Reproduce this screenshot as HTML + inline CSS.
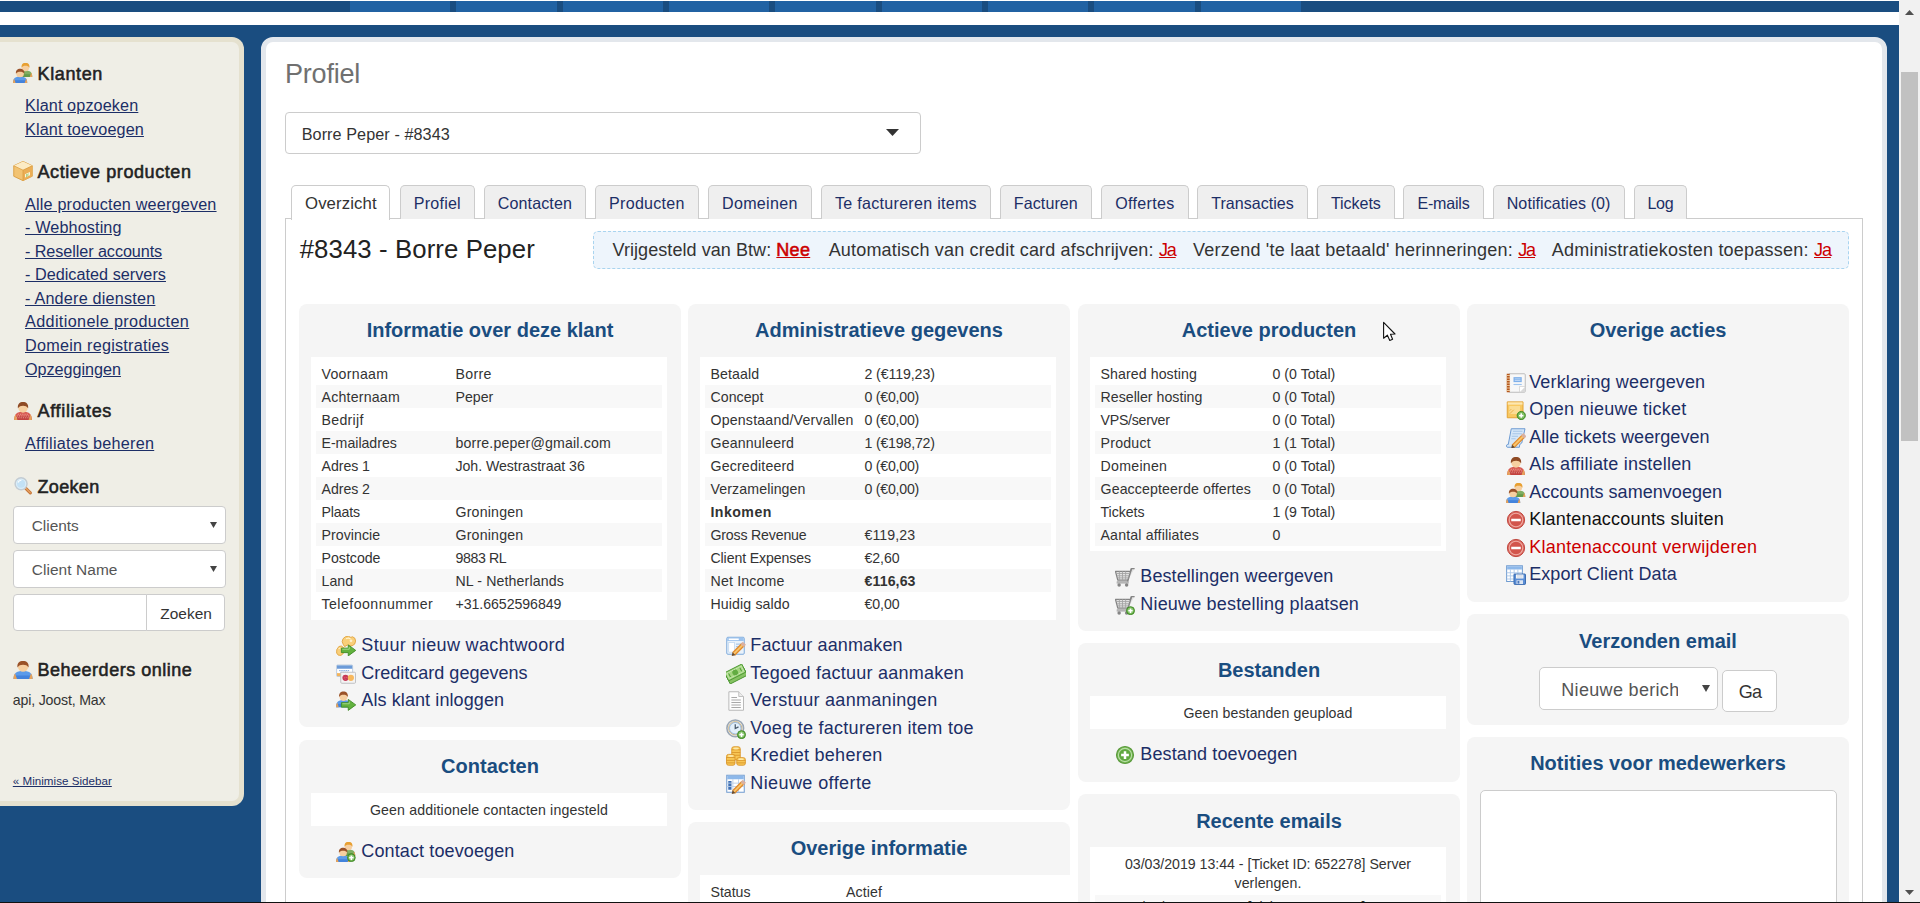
<!DOCTYPE html>
<html lang="nl"><head><meta charset="utf-8"><title>Profiel</title>
<style>
*{box-sizing:border-box;margin:0;padding:0}
html,body{width:1920px;height:903px;overflow:hidden}
body{background:#1a4d80;font-family:"Liberation Sans", sans-serif;color:#333;position:relative;-webkit-font-smoothing:antialiased}
a{color:inherit;text-decoration:none}
ul{list-style:none}
h1,h2,h3{font-weight:400;font-size:inherit}
.abs{position:absolute}
.bl{position:absolute;display:flex;align-items:baseline;white-space:nowrap;line-height:1}
.bl::before{content:"";display:block;width:0;height:30px;flex:none}
.bl.c{justify-content:center}
.t{white-space:pre}
.ic{display:block;flex:none}
#nav{position:absolute;left:0;top:0;width:1899px;height:12px;background:#1a4d80;border-top:1px solid #fff}
#nav li{position:absolute;top:0;height:11px;background:#2162a3}
#topbar{position:absolute;left:0;top:12px;width:1899px;height:13px;background:#fff}
#sidebar{position:absolute;left:0;top:37px;width:244px;height:769px;background:#efeee6;border:5px solid #e5e1cf;border-left:0;border-radius:0 12px 12px 0}
#content{position:absolute;left:261px;top:37px;width:1626px;height:900px;background:#fff;border:5px solid #e3e7ec;border-radius:12px}
.sel{position:absolute;background:#fff;border:1px solid #ccc;border-radius:4px}
.tabs li{position:absolute;top:185px;height:34px;background:#efefef;border:1px solid #ccc;border-bottom:0;border-radius:5px 5px 0 0}
.tabs li.on{background:#fff;height:35px}
#tabbox{position:absolute;left:285px;top:218px;width:1578px;height:800px;border:1px solid #ccc}
#infobox{position:absolute;left:593px;top:231px;width:1256px;height:38px;background:#eef5fc;border:1px dashed #a9d4ef;border-radius:5px}
.box{position:absolute;width:382px;background:#f5f5f5;border-radius:8px}
.title{font-family:"Liberation Sans",sans-serif;font-weight:700;font-size:20px;color:#1a4d80;letter-spacing:0}
.stats{position:absolute;left:12px;width:356px;background:#fff;padding:5px}
.r{display:flex;align-items:baseline;height:23px;white-space:nowrap;line-height:1;position:relative}
.r::before{content:"";display:block;width:0;height:17px;flex:none}
.r:nth-child(even){background:#f8f8f8}
.r .l{flex:none;padding-left:5.500px;display:block}
.r .v{flex:none;display:block}
.r.c{justify-content:center}
.lk{position:absolute;display:flex;align-items:baseline;white-space:nowrap;line-height:1;color:#1c2e66}
.lk::before{content:"";display:block;width:0;height:30px;flex:none}
#sb{position:absolute;left:1899px;top:0;width:21px;height:903px;background:#f1f1f1}
#sb i{position:absolute;left:2px;width:17px;background:#c1c1c1;top:72px;height:369px}
#bottomline{position:absolute;left:0;top:902px;width:1920px;height:1px;background:#111}
</style></head>
<body>
<ul id="nav">
<li style="left:350.0px;width:100.300px"></li>
<li style="left:456.3px;width:100.300px"></li>
<li style="left:562.7px;width:100.300px"></li>
<li style="left:669.0px;width:100.300px"></li>
<li style="left:775.3px;width:100.300px"></li>
<li style="left:881.6px;width:100.300px"></li>
<li style="left:988.0px;width:100.300px"></li>
<li style="left:1094.3px;width:100.300px"></li>
<li style="left:1200.6px;width:100.300px"></li>
</ul>
<div id="topbar"></div>
<div id="sidebar"></div>
<div class="abs" style="left:13px;top:62.5px"><svg class="ic" width="20" height="20" viewBox="0 0 16 16"><g transform="translate(4.6 -0.2) scale(0.9 0.95)"><path d="M0 12C0 8.300 1.600 6.600 6 6.600S12 8.300 12 12Z" fill="#7fae62"/><path d="M.2 12C.2 11 .5 10.300 1 9.600L11 9.600C11.500 10.300 11.800 11 11.800 12Z" fill="#4f8a34" opacity=".55"/><path d="M0 12C0 10.500.3 9.300 1 8.400L2.200 12ZM12 12C12 10.500 11.700 9.300 11 8.400L9.800 12Z" fill="#e6a25a"/><circle cx="6" cy="4" r="3.200" fill="#f6cfa0"/><path d="M2.500 4.300C2.100 1.300 3.800 0 6 0S9.900 1.300 9.500 4.300C8.700 2.900 7.600 2.500 6 2.500S3.300 2.900 2.500 4.300Z" fill="#e8a032"/></g><g transform="translate(0 4.5) scale(0.95 0.96)"><path d="M0 12C0 8.300 1.600 6.600 6 6.600S12 8.300 12 12Z" fill="#5b9bea"/><path d="M.2 12C.2 11 .5 10.300 1 9.600L11 9.600C11.500 10.300 11.800 11 11.800 12Z" fill="#2f6fd0" opacity=".55"/><path d="M0 12C0 10.500.3 9.300 1 8.400L2.200 12ZM12 12C12 10.500 11.700 9.300 11 8.400L9.800 12Z" fill="#e6a25a"/><circle cx="6" cy="4" r="3.200" fill="#f6cfa0"/><path d="M2.500 4.300C2.100 1.300 3.800 0 6 0S9.900 1.300 9.500 4.300C8.700 2.900 7.600 2.500 6 2.500S3.300 2.900 2.500 4.300Z" fill="#9a5228"/></g></svg></div>
<h3 class="bl" style="left:37.5px;top:50px;"><span class="t" id="t1" style="font-size:18.03px;-webkit-text-stroke:.55px currentColor;color:#222;letter-spacing:0.618px;">Klanten</span></h3>
<div class="bl" style="left:25px;top:81.3px;"><a><span class="t" id="t2" style="font-size:16.22px;color:#1c2e66;text-decoration:underline;letter-spacing:0.115px;">Klant opzoeken</span></a></div>
<div class="bl" style="left:25px;top:104.80000000000001px;"><a><span class="t" id="t3" style="font-size:16.22px;color:#1c2e66;text-decoration:underline;letter-spacing:0.12px;">Klant toevoegen</span></a></div>
<div class="abs" style="left:13px;top:160.5px"><svg class="ic" width="20" height="20" viewBox="0 0 16 16"><path d="M8 .3l7.400 3.500v8.400l-7.400 3.500-7.400-3.500v-8.400z" fill="#f2c372" stroke="#d99b3e" stroke-width=".7" stroke-linejoin="round"/><path d="M8 .3l7.400 3.500-7.400 3.500-7.400-3.500z" fill="#fcebc4"/><path d="M8 7.300v8.400l7.400-3.500v-8.400z" fill="#ebae56"/><path d="M8 7.300v8.400M.6 3.800l7.400 3.500 7.400-3.500" fill="none" stroke="#d99b3e" stroke-width=".6"/><path d="M9.600 10.600l4-1.900v2.600l-4 1.900z" fill="#fdf6dc"/><path d="M10.400 11.300l2.400-1.200M10.400 12.300l2.400-1.200" stroke="#62b23e" stroke-width=".7" stroke-dasharray=".8 .5"/></svg></div>
<h3 class="bl" style="left:37.5px;top:148px;"><span class="t" id="t4" style="font-size:18.03px;-webkit-text-stroke:.55px currentColor;color:#222;letter-spacing:0.58px;">Actieve producten</span></h3>
<div class="bl" style="left:25px;top:179.7px;"><a><span class="t" id="t5" style="font-size:16.22px;color:#1c2e66;text-decoration:underline;letter-spacing:0.174px;">Alle producten weergeven</span></a></div>
<div class="bl" style="left:25px;top:203.2px;"><a><span class="t" id="t6" style="font-size:16.22px;color:#1c2e66;text-decoration:underline;letter-spacing:0.121px;">- Webhosting</span></a></div>
<div class="bl" style="left:25px;top:226.8px;"><a><span class="t" id="t7" style="font-size:16.22px;color:#1c2e66;text-decoration:underline;letter-spacing:-0.081px;">- Reseller accounts</span></a></div>
<div class="bl" style="left:25px;top:250.39999999999998px;"><a><span class="t" id="t8" style="font-size:16.22px;color:#1c2e66;text-decoration:underline;letter-spacing:0.025px;">- Dedicated servers</span></a></div>
<div class="bl" style="left:25px;top:273.9px;"><a><span class="t" id="t9" style="font-size:16.22px;color:#1c2e66;text-decoration:underline;letter-spacing:0.198px;">- Andere diensten</span></a></div>
<div class="bl" style="left:25px;top:297.4px;"><a><span class="t" id="t10" style="font-size:16.22px;color:#1c2e66;text-decoration:underline;letter-spacing:0.355px;">Additionele producten</span></a></div>
<div class="bl" style="left:25px;top:321.0px;"><a><span class="t" id="t11" style="font-size:16.22px;color:#1c2e66;text-decoration:underline;letter-spacing:0.239px;">Domein registraties</span></a></div>
<div class="bl" style="left:25px;top:344.5px;"><a><span class="t" id="t12" style="font-size:16.22px;color:#1c2e66;text-decoration:underline;letter-spacing:-0.044px;">Opzeggingen</span></a></div>
<div class="abs" style="left:13px;top:399.8px"><svg class="ic" width="20" height="20" viewBox="0 0 16 16"><g transform="translate(1 1.5) scale(1.17 1.2)"><path d="M0 12C0 8.300 1.600 6.600 6 6.600S12 8.300 12 12Z" fill="#d85a52"/><path d="M.2 12C.2 11 .5 10.300 1 9.600L11 9.600C11.500 10.300 11.800 11 11.800 12Z" fill="#b03030" opacity=".55"/><path d="M0 12C0 10.500.3 9.300 1 8.400L2.200 12ZM12 12C12 10.500 11.700 9.300 11 8.400L9.800 12Z" fill="#e6a25a"/><circle cx="6" cy="4" r="3.200" fill="#f6cfa0"/><path d="M2.500 4.300C2.100 1.300 3.800 0 6 0S9.900 1.300 9.500 4.300C8.700 2.900 7.600 2.500 6 2.500S3.300 2.900 2.500 4.300Z" fill="#8e4a24"/></g><path d="M3 12.800h10M2.500 14.200h11M3.800 11.400h8.400" stroke="#f4b8b0" stroke-width=".55" stroke-dasharray=".9 .9"/></svg></div>
<h3 class="bl" style="left:37.5px;top:387.3px;"><span class="t" id="t13" style="font-size:18.03px;-webkit-text-stroke:.55px currentColor;color:#222;letter-spacing:0.678px;">Affiliates</span></h3>
<div class="bl" style="left:25px;top:419.2px;"><a><span class="t" id="t14" style="font-size:16.22px;color:#1c2e66;text-decoration:underline;letter-spacing:0.239px;">Affiliates beheren</span></a></div>
<div class="abs" style="left:13px;top:475.0px"><svg class="ic" width="20" height="20" viewBox="0 0 16 16"><g transform="translate(.8 1.300) scale(.9)"><path d="M9.800 9.800l4.700 4.700" stroke="#c8783a" stroke-width="2.800" stroke-linecap="round"/><path d="M10.400 10.200l4 4" stroke="#eaa86a" stroke-width=".9" stroke-linecap="round"/><circle cx="6.300" cy="6.300" r="5.300" fill="#d9edf9" stroke="#c3ccd3" stroke-width="1.300"/><circle cx="6.300" cy="6.300" r="3.600" fill="#c3e1f5"/><path d="M3.600 5.200a3 3 0 0 1 3-2" stroke="#fff" stroke-width="1" fill="none"/></g></svg></div>
<h3 class="bl" style="left:37.5px;top:462.5px;"><span class="t" id="t15" style="font-size:18.03px;-webkit-text-stroke:.55px currentColor;color:#222;letter-spacing:0.328px;">Zoeken</span></h3>
<div class="sel" style="left:13px;top:506px;width:213px;height:37.500px"><svg class="abs" width="7" height="6" viewBox="0 0 7 6" style="left:196px;top:15px"><path d="M0 0h7l-3.500 6z" fill="#444"/></svg></div>
<div class="bl" style="left:31.7px;top:501.20000000000005px;"><span class="t" id="t16" style="font-size:15.45px;color:#555;letter-spacing:-0.007px;">Clients</span></div>
<div class="sel" style="left:13px;top:550px;width:213px;height:37.500px"><svg class="abs" width="7" height="6" viewBox="0 0 7 6" style="left:196px;top:15px"><path d="M0 0h7l-3.500 6z" fill="#444"/></svg></div>
<div class="bl" style="left:31.7px;top:545.3px;"><span class="t" id="t17" style="font-size:15.45px;color:#555;letter-spacing:0.081px;">Client Name</span></div>
<div class="sel" style="left:13px;top:594px;width:134px;height:36.500px;border-radius:4px 0 0 4px"></div>
<div class="sel" style="left:146px;top:594px;width:79px;height:36.500px;border-radius:0 4px 4px 0"></div>
<div class="bl" style="left:160.3px;top:588.5px;"><span class="t" id="t18" style="font-size:15.45px;color:#333;letter-spacing:0.008px;">Zoeken</span></div>
<div class="abs" style="left:13px;top:658.5px"><svg class="ic" width="20" height="20" viewBox="0 0 16 16"><g transform="translate(0.4 1.6) scale(1.27 1.2)"><path d="M0 12C0 8.300 1.600 6.600 6 6.600S12 8.300 12 12Z" fill="#5b9bea"/><path d="M.2 12C.2 11 .5 10.300 1 9.600L11 9.600C11.500 10.300 11.800 11 11.800 12Z" fill="#2f6fd0" opacity=".55"/><path d="M0 12C0 10.500.3 9.300 1 8.400L2.200 12ZM12 12C12 10.500 11.700 9.300 11 8.400L9.800 12Z" fill="#e6a25a"/><circle cx="6" cy="4" r="3.200" fill="#f6cfa0"/><path d="M2.500 4.300C2.100 1.300 3.800 0 6 0S9.900 1.300 9.500 4.300C8.700 2.900 7.600 2.500 6 2.500S3.300 2.900 2.500 4.300Z" fill="#9a5228"/></g></svg></div>
<h3 class="bl" style="left:37.5px;top:646px;"><span class="t" id="t19" style="font-size:18.03px;-webkit-text-stroke:.55px currentColor;color:#222;letter-spacing:0.505px;">Beheerders online</span></h3>
<div class="bl" style="left:12.8px;top:675.3px;"><span class="t" id="t20" style="font-size:14.16px;color:#333;letter-spacing:-0.168px;">api, Joost, Max</span></div>
<div class="bl" style="left:12.8px;top:755px;"><a><span class="t" id="t21" style="font-size:11.59px;color:#1c2e66;text-decoration:underline;letter-spacing:0.03px;">« Minimise Sidebar</span></a></div>
<div id="content"></div>
<h1 class="bl" style="left:285px;top:53px;"><span class="t" id="t22" style="font-size:27.04px;color:#707070;letter-spacing:-0.212px;">Profiel</span></h1>
<div class="sel" style="left:285px;top:112px;width:636px;height:42px"><svg class="abs" width="13" height="7" viewBox="0 0 13 7" style="left:600px;top:16px"><path d="M0 0h13l-6.500 7z" fill="#333"/></svg></div>
<div class="bl" style="left:301.7px;top:110px;"><span class="t" id="t23" style="font-size:16.22px;color:#333;letter-spacing:0.07px;">Borre Peper - #8343</span></div>
<div id="tabbox"></div>
<ul class="tabs">
<li class="on" style="left:291.3px;width:99.2px"></li>
<li class="" style="left:400.0px;width:74.7px"></li>
<li class="" style="left:484.0px;width:101.8px"></li>
<li class="" style="left:595.0px;width:103.8px"></li>
<li class="" style="left:708.0px;width:103.7px"></li>
<li class="" style="left:821.2px;width:169.6px"></li>
<li class="" style="left:1000.0px;width:91.7px"></li>
<li class="" style="left:1101.2px;width:87.6px"></li>
<li class="" style="left:1197.2px;width:110.6px"></li>
<li class="" style="left:1317.0px;width:77.7px"></li>
<li class="" style="left:1403.3px;width:80.4px"></li>
<li class="" style="left:1492.5px;width:132.2px"></li>
<li class="" style="left:1634.2px;width:52.5px"></li>
</ul>
<div class="bl c" style="left:291.3px;width:99.2px;top:179px;"><a><span class="t" id="t24" style="font-size:16.74px;color:#333;letter-spacing:0.125px;">Overzicht</span></a></div>
<div class="bl c" style="left:400px;width:74.7px;top:179px;"><a><span class="t" id="t25" style="font-size:16.07px;color:#1c2e66;letter-spacing:0.212px;">Profiel</span></a></div>
<div class="bl c" style="left:484px;width:101.8px;top:179px;"><a><span class="t" id="t26" style="font-size:16.07px;color:#1c2e66;letter-spacing:0.123px;">Contacten</span></a></div>
<div class="bl c" style="left:595px;width:103.8px;top:179px;"><a><span class="t" id="t27" style="font-size:16.07px;color:#1c2e66;letter-spacing:0.262px;">Producten</span></a></div>
<div class="bl c" style="left:708px;width:103.7px;top:179px;"><a><span class="t" id="t28" style="font-size:16.07px;color:#1c2e66;letter-spacing:0.312px;">Domeinen</span></a></div>
<div class="bl c" style="left:821.2px;width:169.6px;top:179px;"><a><span class="t" id="t29" style="font-size:16.07px;color:#1c2e66;letter-spacing:0.279px;">Te factureren items</span></a></div>
<div class="bl c" style="left:1000px;width:91.7px;top:179px;"><a><span class="t" id="t30" style="font-size:16.07px;color:#1c2e66;letter-spacing:0.076px;">Facturen</span></a></div>
<div class="bl c" style="left:1101.2px;width:87.6px;top:179px;"><a><span class="t" id="t31" style="font-size:16.07px;color:#1c2e66;letter-spacing:0.332px;">Offertes</span></a></div>
<div class="bl c" style="left:1197.2px;width:110.6px;top:179px;"><a><span class="t" id="t32" style="font-size:16.07px;color:#1c2e66;letter-spacing:0.001px;">Transacties</span></a></div>
<div class="bl c" style="left:1317px;width:77.7px;top:179px;"><a><span class="t" id="t33" style="font-size:16.07px;color:#1c2e66;letter-spacing:-0.049px;">Tickets</span></a></div>
<div class="bl c" style="left:1403.3px;width:80.4px;top:179px;"><a><span class="t" id="t34" style="font-size:16.07px;color:#1c2e66;letter-spacing:-0.208px;">E-mails</span></a></div>
<div class="bl c" style="left:1492.5px;width:132.2px;top:179px;"><a><span class="t" id="t35" style="font-size:16.07px;color:#1c2e66;letter-spacing:0.07px;">Notificaties (0)</span></a></div>
<div class="bl c" style="left:1634.2px;width:52.5px;top:179px;"><a><span class="t" id="t36" style="font-size:16.07px;color:#1c2e66;letter-spacing:-0.271px;">Log</span></a></div>
<h2 class="bl" style="left:299.7px;top:228px;"><span class="t" id="t37" style="font-size:25.75px;color:#222;letter-spacing:0.096px;">#8343 - Borre Peper</span></h2>
<div id="infobox"></div>
<div class="bl" style="left:612.5px;top:225.8px;"><span class="t" id="t38" style="font-size:18.03px;color:#333;letter-spacing:0.061px;">Vrijgesteld van Btw: </span><a><span class="t" id="t39" style="font-size:18.03px;-webkit-text-stroke:.55px currentColor;color:#cc0000;text-decoration:underline;letter-spacing:0.271px;">Nee</span></a></div>
<div class="bl" style="left:828.7px;top:225.8px;"><span class="t" id="t40" style="font-size:18.03px;color:#333;letter-spacing:0.165px;">Automatisch van credit card afschrijven: </span><a><span class="t" id="t41" style="font-size:18.03px;color:#cc0000;text-decoration:underline;letter-spacing:-1.1px;">Ja</span></a></div>
<div class="bl" style="left:1193px;top:225.8px;"><span class="t" id="t42" style="font-size:18.03px;color:#333;letter-spacing:0.215px;">Verzend 'te laat betaald' herinneringen: </span><a><span class="t" id="t43" style="font-size:18.03px;color:#cc0000;text-decoration:underline;letter-spacing:-1.1px;">Ja</span></a></div>
<div class="bl" style="left:1551.7px;top:225.8px;"><span class="t" id="t44" style="font-size:18.03px;color:#333;letter-spacing:0.224px;">Administratiekosten toepassen: </span><a><span class="t" id="t45" style="font-size:18.03px;color:#cc0000;text-decoration:underline;letter-spacing:-1.1px;">Ja</span></a></div>
<div class="box" style="left:299px;top:304px;height:423px">
<h4 class="bl c title" style="left:0;width:382px;top:3px">Informatie over deze klant</h4>
<div class="stats" style="top:53px;width:356px">
<div class="r"><span class="l" style="width:139.5px"><span class="t" id="t46" style="font-size:14.16px;color:#333;letter-spacing:0.283px;">Voornaam</span></span><span class="v"><span class="t" id="t47" style="font-size:14.16px;color:#333;letter-spacing:0.3px;">Borre</span></span></div>
<div class="r"><span class="l" style="width:139.5px"><span class="t" id="t48" style="font-size:14.16px;color:#333;letter-spacing:0.208px;">Achternaam</span></span><span class="v"><span class="t" id="t49" style="font-size:14.16px;color:#333;letter-spacing:-0.006px;">Peper</span></span></div>
<div class="r"><span class="l" style="width:139.5px"><span class="t" id="t50" style="font-size:14.16px;color:#333;letter-spacing:0.297px;">Bedrijf</span></span></div>
<div class="r"><span class="l" style="width:139.5px"><span class="t" id="t51" style="font-size:14.16px;color:#333;letter-spacing:-0.018px;">E-mailadres</span></span><span class="v"><span class="t" id="t52" style="font-size:14.16px;color:#333;letter-spacing:0.161px;">borre.peper@gmail.com</span></span></div>
<div class="r"><span class="l" style="width:139.5px"><span class="t" id="t53" style="font-size:14.16px;color:#333;letter-spacing:-0.051px;">Adres 1</span></span><span class="v"><span class="t" id="t54" style="font-size:14.16px;color:#333;letter-spacing:-0.055px;">Joh. Westrastraat 36</span></span></div>
<div class="r"><span class="l" style="width:139.5px"><span class="t" id="t55" style="font-size:14.16px;color:#333;letter-spacing:-0.051px;">Adres 2</span></span></div>
<div class="r"><span class="l" style="width:139.5px"><span class="t" id="t56" style="font-size:14.16px;color:#333;letter-spacing:-0.146px;">Plaats</span></span><span class="v"><span class="t" id="t57" style="font-size:14.16px;color:#333;letter-spacing:0.193px;">Groningen</span></span></div>
<div class="r"><span class="l" style="width:139.5px"><span class="t" id="t58" style="font-size:14.16px;color:#333;letter-spacing:0.054px;">Provincie</span></span><span class="v"><span class="t" id="t59" style="font-size:14.16px;color:#333;letter-spacing:0.193px;">Groningen</span></span></div>
<div class="r"><span class="l" style="width:139.5px"><span class="t" id="t60" style="font-size:14.16px;color:#333;letter-spacing:-0.004px;">Postcode</span></span><span class="v"><span class="t" id="t61" style="font-size:14.16px;color:#333;letter-spacing:-0.406px;">9883 RL</span></span></div>
<div class="r"><span class="l" style="width:139.5px"><span class="t" id="t62" style="font-size:14.16px;color:#333;letter-spacing:0.043px;">Land</span></span><span class="v"><span class="t" id="t63" style="font-size:14.16px;color:#333;letter-spacing:0.117px;">NL - Netherlands</span></span></div>
<div class="r"><span class="l" style="width:139.5px"><span class="t" id="t64" style="font-size:14.16px;color:#333;letter-spacing:0.451px;">Telefoonnummer</span></span><span class="v"><span class="t" id="t65" style="font-size:14.16px;color:#333;letter-spacing:-0.061px;">+31.6652596849</span></span></div>
</div>
<div class="lk" style="left:62.3px;top:317.0px"><span class="abs" style="left:-25.299999999999997px;top:15px"><svg class="ic" width="20" height="20" viewBox="0 0 16 16"><path d="M7.500 .6l2.400-.4 2 .9 1.300-.5 1.900 1.200.6 2.300-.8 2.400-2 1.300-2.300.1-1.400-.7-2.300 1.300-1-1.600-1-2.300.7-2.400z" fill="#f9cf7a" stroke="#e0a23c" stroke-width=".7" stroke-linejoin="round"/><path d="M2.300 8.400l2-.4 1.700 1.200.5 2.200-.7 2.600-1.800 1.500-2.200-.2-1.300-1.700.1-2.600z" fill="#f9cf7a" stroke="#e0a23c" stroke-width=".7" stroke-linejoin="round"/><path d="M8 2.200l2-.6 1.600.7M2 10.300l1.400-.8" stroke="#fff3cf" stroke-width=".9" fill="none"/><circle cx="12" cy="3.800" r="1.100" fill="#fdf0cc"/><path d="M4.3 9.7h5.500v-2.600l6 4.400-6 4.400v-2.600h-5.500z" fill="#62b23e" stroke="#3f8a26" stroke-width=".7" stroke-linejoin="round"/><path d="M5.1 10.6h5.500v-1.800" fill="none" stroke="#b4e09a" stroke-width=".6"/></svg></span><a><span class="t" id="t66" style="font-size:18.03px;color:#1c2e66;letter-spacing:0.348px;">Stuur nieuw wachtwoord</span></a></div>
<div class="lk" style="left:62.3px;top:344.5px"><span class="abs" style="left:-25.299999999999997px;top:15px"><svg class="ic" width="20" height="20" viewBox="0 0 16 16"><rect x=".5" y=".8" width="12.800" height="9.200" rx=".7" fill="#fff" stroke="#a9bdd6" stroke-width=".6"/><rect x=".8" y="1.100" width="12.200" height="2.700" fill="#6c9bd8"/><path d="M2.500 5.300h8M3.500 6.600h6" stroke="#7aa7e0" stroke-width=".8" stroke-dasharray="1.200 .5"/><rect x=".8" y="7.300" width="3.400" height="2.400" fill="#f3b45c"/><rect x="3.800" y="6.600" width="11.800" height="8.800" rx=".8" fill="#f4f4f4" stroke="#b9b9bd" stroke-width=".7"/><circle cx="7.600" cy="11" r="2.500" fill="#c73a56"/><circle cx="11.900" cy="11" r="2.500" fill="#f7b85e"/><path d="M6.400 10.200l.9.900M7.900 10.400l.7.700M6.800 11.800l.8.500" stroke="#e87a8c" stroke-width=".5"/></svg></span><a><span class="t" id="t67" style="font-size:18.03px;color:#1c2e66;letter-spacing:-0.003px;">Creditcard gegevens</span></a></div>
<div class="lk" style="left:62.3px;top:372.0px"><span class="abs" style="left:-25.299999999999997px;top:15px"><svg class="ic" width="20" height="20" viewBox="0 0 16 16"><g transform="translate(0 0.3) scale(1.0 1.06)"><path d="M0 12C0 8.300 1.600 6.600 6 6.600S12 8.300 12 12Z" fill="#5b9bea"/><path d="M.2 12C.2 11 .5 10.300 1 9.600L11 9.600C11.500 10.300 11.800 11 11.800 12Z" fill="#2f6fd0" opacity=".55"/><path d="M0 12C0 10.500.3 9.300 1 8.400L2.200 12ZM12 12C12 10.500 11.700 9.300 11 8.400L9.800 12Z" fill="#e6a25a"/><circle cx="6" cy="4" r="3.200" fill="#f6cfa0"/><path d="M2.500 4.300C2.100 1.300 3.800 0 6 0S9.900 1.300 9.500 4.300C8.700 2.900 7.600 2.500 6 2.500S3.300 2.900 2.500 4.300Z" fill="#9a5228"/></g><path d="M4.3 9.3h5.500v-2.600l6 4.400-6 4.400v-2.600h-5.500z" fill="#62b23e" stroke="#3f8a26" stroke-width=".7" stroke-linejoin="round"/><path d="M5.1 10.2h5.500v-1.800" fill="none" stroke="#b4e09a" stroke-width=".6"/></svg></span><a><span class="t" id="t68" style="font-size:18.03px;color:#1c2e66;letter-spacing:0.093px;">Als klant inloggen</span></a></div>
</div>
<div class="box" style="left:299px;top:740px;height:138px">
<h4 class="bl c title" style="left:0;width:382px;top:3px">Contacten</h4>
<div class="stats" style="top:53px;width:356px">
<div class="r c"><span class="t" id="t69" style="font-size:14.16px;color:#333;letter-spacing:0.144px;">Geen additionele contacten ingesteld</span></div>
</div>
<div class="lk" style="left:62.3px;top:87.0px"><span class="abs" style="left:-25.299999999999997px;top:15px"><svg class="ic" width="20" height="20" viewBox="0 0 16 16"><g transform="translate(4.6 -0.2) scale(0.9 0.95)"><path d="M0 12C0 8.300 1.600 6.600 6 6.600S12 8.300 12 12Z" fill="#7fae62"/><path d="M.2 12C.2 11 .5 10.300 1 9.600L11 9.600C11.500 10.300 11.800 11 11.800 12Z" fill="#4f8a34" opacity=".55"/><path d="M0 12C0 10.500.3 9.300 1 8.400L2.200 12ZM12 12C12 10.500 11.700 9.300 11 8.400L9.800 12Z" fill="#e6a25a"/><circle cx="6" cy="4" r="3.200" fill="#f6cfa0"/><path d="M2.500 4.300C2.100 1.300 3.800 0 6 0S9.900 1.300 9.500 4.300C8.700 2.900 7.600 2.500 6 2.500S3.300 2.900 2.500 4.300Z" fill="#e8a032"/></g><g transform="translate(0 4.5) scale(0.95 0.96)"><path d="M0 12C0 8.300 1.600 6.600 6 6.600S12 8.300 12 12Z" fill="#5b9bea"/><path d="M.2 12C.2 11 .5 10.300 1 9.600L11 9.600C11.500 10.300 11.800 11 11.800 12Z" fill="#2f6fd0" opacity=".55"/><path d="M0 12C0 10.500.3 9.300 1 8.400L2.200 12ZM12 12C12 10.500 11.700 9.300 11 8.400L9.800 12Z" fill="#e6a25a"/><circle cx="6" cy="4" r="3.200" fill="#f6cfa0"/><path d="M2.500 4.300C2.100 1.300 3.800 0 6 0S9.900 1.300 9.500 4.300C8.700 2.900 7.600 2.500 6 2.500S3.300 2.900 2.500 4.300Z" fill="#9a5228"/></g><circle cx="12.3" cy="12.5" r="3.1" fill="#58a838" stroke="#3d8524" stroke-width=".7"/><circle cx="12.3" cy="12.5" r="2.1" fill="none" stroke="#a5d68c" stroke-width=".5"/><path d="M10.5 12.5h3.600M12.3 10.7v3.600" stroke="#fff" stroke-width="1.400"/></svg></span><a><span class="t" id="t70" style="font-size:18.03px;color:#1c2e66;letter-spacing:0.113px;">Contact toevoegen</span></a></div>
</div>
<div class="box" style="left:688px;top:304px;height:506px">
<h4 class="bl c title" style="left:0;width:382px;top:3px">Administratieve gegevens</h4>
<div class="stats" style="top:53px;width:356px">
<div class="r"><span class="l" style="width:159.5px"><span class="t" id="t71" style="font-size:14.16px;color:#333;letter-spacing:0.094px;">Betaald</span></span><span class="v"><span class="t" id="t72" style="font-size:14.16px;color:#333;letter-spacing:-0.098px;">2 (€119,23)</span></span></div>
<div class="r"><span class="l" style="width:159.5px"><span class="t" id="t73" style="font-size:14.16px;color:#333;letter-spacing:0.038px;">Concept</span></span><span class="v"><span class="t" id="t74" style="font-size:14.16px;color:#333;letter-spacing:-0.234px;">0 (€0,00)</span></span></div>
<div class="r"><span class="l" style="width:159.5px"><span class="t" id="t75" style="font-size:14.16px;color:#333;letter-spacing:0.186px;">Openstaand/Vervallen</span></span><span class="v"><span class="t" id="t76" style="font-size:14.16px;color:#333;letter-spacing:-0.234px;">0 (€0,00)</span></span></div>
<div class="r"><span class="l" style="width:159.5px"><span class="t" id="t77" style="font-size:14.16px;color:#333;letter-spacing:0.159px;">Geannuleerd</span></span><span class="v"><span class="t" id="t78" style="font-size:14.16px;color:#333;letter-spacing:-0.193px;">1 (€198,72)</span></span></div>
<div class="r"><span class="l" style="width:159.5px"><span class="t" id="t79" style="font-size:14.16px;color:#333;letter-spacing:0.172px;">Gecrediteerd</span></span><span class="v"><span class="t" id="t80" style="font-size:14.16px;color:#333;letter-spacing:-0.234px;">0 (€0,00)</span></span></div>
<div class="r"><span class="l" style="width:159.5px"><span class="t" id="t81" style="font-size:14.16px;color:#333;letter-spacing:0.109px;">Verzamelingen</span></span><span class="v"><span class="t" id="t82" style="font-size:14.16px;color:#333;letter-spacing:-0.234px;">0 (€0,00)</span></span></div>
<div class="r"><span class="l" style="width:159.5px"><span class="t" id="t83" style="font-size:14.16px;font-weight:700;color:#333;letter-spacing:0.44px;">Inkomen</span></span></div>
<div class="r"><span class="l" style="width:159.5px"><span class="t" id="t84" style="font-size:14.16px;color:#333;letter-spacing:-0.185px;">Gross Revenue</span></span><span class="v"><span class="t" id="t85" style="font-size:14.16px;color:#333;letter-spacing:0.087px;">€119,23</span></span></div>
<div class="r"><span class="l" style="width:159.5px"><span class="t" id="t86" style="font-size:14.16px;color:#333;letter-spacing:-0.122px;">Client Expenses</span></span><span class="v"><span class="t" id="t87" style="font-size:14.16px;color:#333;letter-spacing:-0.084px;">€2,60</span></span></div>
<div class="r"><span class="l" style="width:159.5px"><span class="t" id="t88" style="font-size:14.16px;color:#333;letter-spacing:0.175px;">Net Income</span></span><span class="v"><span class="t" id="t89" style="font-size:14.16px;font-weight:700;color:#333;letter-spacing:0.1px;">€116,63</span></span></div>
<div class="r"><span class="l" style="width:159.5px"><span class="t" id="t90" style="font-size:14.16px;color:#333;letter-spacing:0.116px;">Huidig saldo</span></span><span class="v"><span class="t" id="t91" style="font-size:14.16px;color:#333;letter-spacing:-0.084px;">€0,00</span></span></div>
</div>
<div class="lk" style="left:62.3px;top:317.0px"><span class="abs" style="left:-24.299999999999997px;top:15px"><svg class="ic" width="20" height="20" viewBox="0 0 16 16"><rect x=".6" y="1" width="14" height="13.600" rx=".9" fill="#e9f2fb" stroke="#7eaadb" stroke-width=".8"/><rect x="1" y="1.400" width="13.200" height="2.600" fill="#9cc3ee"/><rect x="2.200" y="2" width="8" height="1.300" fill="#fff"/><rect x="2.200" y="5.300" width="4.500" height="7.600" fill="#fff" stroke="#b5d0ec" stroke-width=".5"/><path d="M8 6.500h5M8 8.500h5M8 10.500h3" stroke="#9dbfe6" stroke-width=".8"/><path d="M6.2 14.3L13.8 6.7" stroke="#e08a2c" stroke-width="3.6" stroke-linecap="butt"/><path d="M6.2 14.3L13.8 6.7" stroke="#f9c56c" stroke-width="1.62"/><path d="M4.6 15.9l.6-3 2.400 2.400z" fill="#6a4a2a"/><path d="M12.9 7.6000000000000005L14.700000000000001 5.8" stroke="#d9b0a0" stroke-width="3.6"/></svg></span><a><span class="t" id="t92" style="font-size:18.03px;color:#1c2e66;letter-spacing:0.137px;">Factuur aanmaken</span></a></div>
<div class="lk" style="left:62.3px;top:344.5px"><span class="abs" style="left:-24.299999999999997px;top:15px"><svg class="ic" width="20" height="20" viewBox="0 0 16 16"><g transform="rotate(-27 8 8)"><rect x=".3" y="5.800" width="15.400" height="7.200" fill="#86c262" stroke="#4a9630" stroke-width=".7"/><rect x=".3" y="3" width="15.400" height="7.200" fill="#a3d67f" stroke="#4a9630" stroke-width=".7"/><rect x="1.600" y="4.300" width="12.800" height="4.600" fill="none" stroke="#dff0d2" stroke-width=".6" stroke-dasharray="1 .6"/><ellipse cx="8" cy="6.600" rx="2.300" ry="2.300" fill="#62ac42"/><path d="M3 5v3.200M13 5v3.200" stroke="#4a9630" stroke-width=".7"/></g></svg></span><a><span class="t" id="t93" style="font-size:18.03px;color:#1c2e66;letter-spacing:0.239px;">Tegoed factuur aanmaken</span></a></div>
<div class="lk" style="left:62.3px;top:372.0px"><span class="abs" style="left:-24.299999999999997px;top:15px"><svg class="ic" width="20" height="20" viewBox="0 0 16 16"><path d="M2.300 .6h7.900l3.800 3.800v11h-11.700z" fill="#fdfdfd" stroke="#b9b9b9" stroke-width=".8" stroke-linejoin="round"/><path d="M10.200 .6v3.800h3.800" fill="#ececec" stroke="#b9b9b9" stroke-width=".7"/><path d="M4.300 5.200h4.500M4.300 7.200h7.600M4.300 9.200h7.600M4.300 11.200h7.600M4.300 13.200h7.600" stroke="#a8a8a8" stroke-width=".8"/></svg></span><a><span class="t" id="t94" style="font-size:18.03px;color:#1c2e66;letter-spacing:0.295px;">Verstuur aanmaningen</span></a></div>
<div class="lk" style="left:62.3px;top:399.5px"><span class="abs" style="left:-24.299999999999997px;top:15px"><svg class="ic" width="20" height="20" viewBox="0 0 16 16"><circle cx="7.400" cy="7.400" r="6.700" fill="#eceae4" stroke="#9aa6b4" stroke-width="1.200"/><circle cx="7.400" cy="7.400" r="5.300" fill="none" stroke="#d2b98a" stroke-width=".8"/><circle cx="7.400" cy="7.400" r="4.600" fill="#e3effa" stroke="#7fa7d4" stroke-width=".6"/><path d="M7.400 4.200v3.400l2.600-1.300" stroke="#4a5a6c" stroke-width="1" fill="none"/><circle cx="12.4" cy="12.5" r="3.2" fill="#58a838" stroke="#3d8524" stroke-width=".7"/><circle cx="12.4" cy="12.5" r="2.2" fill="none" stroke="#a5d68c" stroke-width=".5"/><path d="M10.6 12.5h3.600M12.4 10.7v3.600" stroke="#fff" stroke-width="1.400"/></svg></span><a><span class="t" id="t95" style="font-size:18.03px;color:#1c2e66;letter-spacing:0.264px;">Voeg te factureren item toe</span></a></div>
<div class="lk" style="left:62.3px;top:427.0px"><span class="abs" style="left:-24.299999999999997px;top:15px"><svg class="ic" width="20" height="20" viewBox="0 0 16 16"><g fill="#f8c654" stroke="#d9962c" stroke-width=".7"><rect x="4.600" y=".6" width="6.800" height="10.500" rx="1.600"/><path d="M4.600 3h6.800M4.600 5.200h6.800M4.600 7.400h6.800" fill="none"/><rect x=".4" y="6.700" width="6.800" height="8.700" rx="1.600"/><path d="M.4 9.200h6.800M.4 11.500h6.800M.4 13.500h6.800" fill="none"/><rect x="8.600" y="9.300" width="6.900" height="6.100" rx="1.600"/><path d="M8.600 11.500h6.900M8.600 13.500h6.900" fill="none"/></g><ellipse cx="8" cy="1.900" rx="2.300" ry=".8" fill="#fde9a8"/><ellipse cx="3.800" cy="8" rx="2.300" ry=".8" fill="#fde9a8"/><ellipse cx="12" cy="10.500" rx="2.300" ry=".7" fill="#fde9a8"/></svg></span><a><span class="t" id="t96" style="font-size:18.03px;color:#1c2e66;letter-spacing:0.269px;">Krediet beheren</span></a></div>
<div class="lk" style="left:62.3px;top:454.5px"><span class="abs" style="left:-24.299999999999997px;top:15px"><svg class="ic" width="20" height="20" viewBox="0 0 16 16"><rect x=".6" y="1" width="14" height="13.600" fill="#fff" stroke="#6f9bd0" stroke-width=".8"/><rect x="1" y="1.400" width="13.200" height="2.800" fill="#8db8ea"/><rect x="1.800" y="5.600" width="2.600" height="7" fill="#3f6fb4"/><path d="M.6 7.300h14M.6 10h14M5.500 4.200v10.400M10 4.200v10.400" stroke="#b8cde6" stroke-width=".7"/><path d="M6.2 14.3L13.8 6.7" stroke="#e08a2c" stroke-width="3.6" stroke-linecap="butt"/><path d="M6.2 14.3L13.8 6.7" stroke="#f9c56c" stroke-width="1.62"/><path d="M4.6 15.9l.6-3 2.400 2.400z" fill="#6a4a2a"/><path d="M12.9 7.6000000000000005L14.700000000000001 5.8" stroke="#d9b0a0" stroke-width="3.6"/></svg></span><a><span class="t" id="t97" style="font-size:18.03px;color:#1c2e66;letter-spacing:0.4px;">Nieuwe offerte</span></a></div>
</div>
<div class="box" style="left:688px;top:822px;height:200px">
<h4 class="bl c title" style="left:0;width:382px;top:3px">Overige informatie</h4>
<div class="stats" style="top:53px;width:370px">
<div class="r"><span class="l" style="width:141px"><span class="t" id="t98" style="font-size:14.16px;color:#333;letter-spacing:-0.029px;">Status</span></span><span class="v"><span class="t" id="t99" style="font-size:14.16px;color:#333;letter-spacing:0.099px;">Actief</span></span></div>
<div class="r"><span class="l" style="width:141px"><span class="t" id="t100" style="font-size:14.16px;color:#333;letter-spacing:0.188px;">Klantgroep</span></span><span class="v"><span class="t" id="t101" style="font-size:14.16px;color:#333;letter-spacing:-0.191px;">Geen</span></span></div>
</div>
</div>
<div class="box" style="left:1078px;top:304px;height:327px">
<h4 class="bl c title" style="left:0;width:382px;top:3px">Actieve producten</h4>
<div class="stats" style="top:53px;width:356px">
<div class="r"><span class="l" style="width:177.5px"><span class="t" id="t102" style="font-size:14.16px;color:#333;letter-spacing:0.088px;">Shared hosting</span></span><span class="v"><span class="t" id="t103" style="font-size:14.16px;color:#333;letter-spacing:0.014px;">0 (0 Total)</span></span></div>
<div class="r"><span class="l" style="width:177.5px"><span class="t" id="t104" style="font-size:14.16px;color:#333;letter-spacing:0.022px;">Reseller hosting</span></span><span class="v"><span class="t" id="t105" style="font-size:14.16px;color:#333;letter-spacing:0.014px;">0 (0 Total)</span></span></div>
<div class="r"><span class="l" style="width:177.5px"><span class="t" id="t106" style="font-size:14.16px;color:#333;letter-spacing:-0.244px;">VPS/server</span></span><span class="v"><span class="t" id="t107" style="font-size:14.16px;color:#333;letter-spacing:0.014px;">0 (0 Total)</span></span></div>
<div class="r"><span class="l" style="width:177.5px"><span class="t" id="t108" style="font-size:14.16px;color:#333;letter-spacing:0.243px;">Product</span></span><span class="v"><span class="t" id="t109" style="font-size:14.16px;color:#333;letter-spacing:0.014px;">1 (1 Total)</span></span></div>
<div class="r"><span class="l" style="width:177.5px"><span class="t" id="t110" style="font-size:14.16px;color:#333;letter-spacing:0.279px;">Domeinen</span></span><span class="v"><span class="t" id="t111" style="font-size:14.16px;color:#333;letter-spacing:0.014px;">0 (0 Total)</span></span></div>
<div class="r"><span class="l" style="width:177.5px"><span class="t" id="t112" style="font-size:14.16px;color:#333;letter-spacing:0.122px;">Geaccepteerde offertes</span></span><span class="v"><span class="t" id="t113" style="font-size:14.16px;color:#333;letter-spacing:0.014px;">0 (0 Total)</span></span></div>
<div class="r"><span class="l" style="width:177.5px"><span class="t" id="t114" style="font-size:14.16px;color:#333;letter-spacing:-0.04px;">Tickets</span></span><span class="v"><span class="t" id="t115" style="font-size:14.16px;color:#333;letter-spacing:0.014px;">1 (9 Total)</span></span></div>
<div class="r"><span class="l" style="width:177.5px"><span class="t" id="t116" style="font-size:14.16px;color:#333;letter-spacing:0.16px;">Aantal affiliates</span></span><span class="v"><span class="t" id="t117" style="font-size:14.16px;color:#333;letter-spacing:0.0px;">0</span></span></div>
</div>
<div class="lk" style="left:62.3px;top:248.0px"><span class="abs" style="left:-25.299999999999997px;top:15px"><svg class="ic" width="20" height="20" viewBox="0 0 16 16"><path d="M15.700 1.200h-2.500l-.8 2.300h-12l1.800 6.900h8.200" fill="#e2e2e2" stroke="#858585" stroke-width="1" stroke-linejoin="round"/><path d="M13.200 1.200l-3.300 10.900h-8.200" fill="none" stroke="#858585" stroke-width="1.200"/><path d="M1.300 5.200h10.600M1.800 7h9.600M2.300 8.700h8.600M3.500 3.500v6.900M6 3.500v6.900M8.500 3.500v6.900" stroke="#a4a4a4" stroke-width=".7"/><path d="M1.300 12.400h9.700" stroke="#b4b4b4" stroke-width="1.800"/><circle cx="3.300" cy="14.400" r="1.400" fill="#858585"/><circle cx="9.300" cy="14.400" r="1.400" fill="#858585"/></svg></span><a><span class="t" id="t118" style="font-size:18.03px;color:#1c2e66;letter-spacing:0.083px;">Bestellingen weergeven</span></a></div>
<div class="lk" style="left:62.3px;top:275.5px"><span class="abs" style="left:-25.299999999999997px;top:15px"><svg class="ic" width="20" height="20" viewBox="0 0 16 16"><path d="M15.700 1.200h-2.500l-.8 2.300h-12l1.800 6.900h8.200" fill="#e2e2e2" stroke="#858585" stroke-width="1" stroke-linejoin="round"/><path d="M13.200 1.200l-3.300 10.900h-8.200" fill="none" stroke="#858585" stroke-width="1.200"/><path d="M1.300 5.200h10.600M1.800 7h9.600M2.300 8.700h8.600M3.500 3.500v6.900M6 3.500v6.900M8.500 3.500v6.900" stroke="#a4a4a4" stroke-width=".7"/><path d="M1.300 12.400h9.700" stroke="#b4b4b4" stroke-width="1.800"/><circle cx="3.300" cy="14.400" r="1.400" fill="#858585"/><circle cx="9.300" cy="14.400" r="1.400" fill="#858585"/><circle cx="12.4" cy="12.5" r="3.2" fill="#58a838" stroke="#3d8524" stroke-width=".7"/><circle cx="12.4" cy="12.5" r="2.2" fill="none" stroke="#a5d68c" stroke-width=".5"/><path d="M10.6 12.5h3.600M12.4 10.7v3.600" stroke="#fff" stroke-width="1.400"/></svg></span><a><span class="t" id="t119" style="font-size:18.03px;color:#1c2e66;letter-spacing:0.171px;">Nieuwe bestelling plaatsen</span></a></div>
</div>
<div class="box" style="left:1078px;top:643px;height:138.5px">
<h4 class="bl c title" style="left:0;width:382px;top:4px">Bestanden</h4>
<div class="stats" style="top:53px;width:356px">
<div class="r c"><span class="t" id="t120" style="font-size:14.16px;color:#333;letter-spacing:0.095px;">Geen bestanden geupload</span></div>
</div>
<div class="lk" style="left:62.3px;top:87.29999999999995px"><span class="abs" style="left:-25.299999999999997px;top:15px"><svg class="ic" width="20" height="20" viewBox="0 0 16 16"><circle cx="8" cy="8" r="6.800" fill="#74b552" stroke="#5a9a3c" stroke-width=".9"/><circle cx="8" cy="8" r="5.300" fill="#5fa83f" stroke="#b9dfa6" stroke-width=".9"/><path d="M4.900 8h6.200M8 4.900v6.200" stroke="#fff" stroke-width="2"/></svg></span><a><span class="t" id="t121" style="font-size:18.03px;color:#1c2e66;letter-spacing:0.112px;">Bestand toevoegen</span></a></div>
</div>
<div class="box" style="left:1078px;top:794px;height:200px">
<h4 class="bl c title" style="left:0;width:382px;top:3.5px">Recente emails</h4>
<div class="stats" style="top:53px;width:356px">
<div style="height:42.500px;position:relative"><div class="bl c" style="left:0px;width:346px;top:-12.8px;"><span class="t" id="t122" style="font-size:14.16px;color:#333;letter-spacing:-0.015px;">03/03/2019 13:44 - [Ticket ID: 652278] Server</span></div><div class="bl c" style="left:0px;width:346px;top:6.299999999999997px;"><span class="t" id="t123" style="font-size:14.16px;color:#333;letter-spacing:0.097px;">verlengen.</span></div></div>
<div style="height:42.500px;position:relative;background:#f8f8f8"><div class="bl c" style="left:0px;width:346px;top:-12.8px;"><span class="t" id="t124" style="font-size:14.16px;color:#333;letter-spacing:-0.015px;">03/03/2019 09:44 - [Ticket ID: 652278] Server</span></div></div>
</div>
</div>
<div class="box" style="left:1467px;top:304px;height:297.7px">
<h4 class="bl c title" style="left:0;width:382px;top:3px">Overige acties</h4>
<div class="lk" style="left:62.2px;top:53.69999999999999px"><span class="abs" style="left:-23.200000000000003px;top:15px"><svg class="ic" width="20" height="20" viewBox="0 0 16 16"><rect x="2" y=".6" width="13.400" height="14.800" rx=".8" fill="#f8f8f8" stroke="#bcbcbc" stroke-width=".8"/><path d="M10.800 15.400l4.600-4.600v4.600z" fill="#d9d9d9"/><path d="M10.800 15.400v-4.600h4.600" fill="#fff" stroke="#c8c8c8" stroke-width=".5"/><rect x=".6" y=".6" width="2.400" height="14.800" fill="#b5581c"/><path d="M.3 2h3M.3 4h3M.3 6h3M.3 8h3M.3 10h3M.3 12h3M.3 14h3" stroke="#efcfa8" stroke-width=".7"/><rect x="6" y="3.300" width="6.600" height="4" fill="#7fb0ea"/><path d="M7 4.700h4.600M7 6h4.600" stroke="#cfe2f7" stroke-width=".6"/><path d="M6 9.200h6.600" stroke="#9fc4ee" stroke-width=".9"/></svg></span><a><span class="t" id="t125" style="font-size:18.03px;color:#1c2e66;letter-spacing:0.141px;">Verklaring weergeven</span></a></div>
<div class="lk" style="left:62.2px;top:81.19999999999999px"><span class="abs" style="left:-23.200000000000003px;top:15px"><svg class="ic" width="20" height="20" viewBox="0 0 16 16"><path d="M1 1.500h12.600v9.500l-3.200 3.200h-9.400z" fill="#f8c860" stroke="#e3a334" stroke-width=".8" stroke-linejoin="round"/><path d="M1.400 1.900h11.800v1.800h-11.800z" fill="#fde7b2"/><rect x="2.600" y="4.800" width="8.600" height="6.400" fill="#fbdc94"/><path d="M3 11l3.200-3.200M3 8.500l1.200-1.200" stroke="#eab04c" stroke-width=".8"/><circle cx="12.2" cy="12.4" r="3.3" fill="#58a838" stroke="#3d8524" stroke-width=".7"/><circle cx="12.2" cy="12.4" r="2.3" fill="none" stroke="#a5d68c" stroke-width=".5"/><path d="M10.399999999999999 12.4h3.600M12.2 10.6v3.600" stroke="#fff" stroke-width="1.400"/></svg></span><a><span class="t" id="t126" style="font-size:18.03px;color:#1c2e66;letter-spacing:0.23px;">Open nieuwe ticket</span></a></div>
<div class="lk" style="left:62.2px;top:108.69999999999999px"><span class="abs" style="left:-23.200000000000003px;top:15px"><svg class="ic" width="20" height="20" viewBox="0 0 16 16"><path d="M4.200 .6h11l-2.600 11.400-1.600 1.200-.3 2.200h-9.700c-.8 0-.8-2.200 0-2.200h.8z" fill="#d6e7f8" stroke="#6c9ad2" stroke-width=".8" stroke-linejoin="round"/><path d="M5.600 2.600h7.600M5.100 4.600h7.600M4.600 6.600h5M4.200 8.600h3.500" stroke="#9fc0e6" stroke-width=".7"/><path d="M5.8 14.6L14.2 6.2" stroke="#e08a2c" stroke-width="3.6" stroke-linecap="butt"/><path d="M5.8 14.6L14.2 6.2" stroke="#f9c56c" stroke-width="1.62"/><path d="M4.199999999999999 16.2l.6-3 2.400 2.400z" fill="#6a4a2a"/><path d="M13.299999999999999 7.1000000000000005L15.1 5.3" stroke="#d9b0a0" stroke-width="3.6"/></svg></span><a><span class="t" id="t127" style="font-size:18.03px;color:#1c2e66;letter-spacing:0.055px;">Alle tickets weergeven</span></a></div>
<div class="lk" style="left:62.2px;top:136.2px"><span class="abs" style="left:-23.200000000000003px;top:15px"><svg class="ic" width="20" height="20" viewBox="0 0 16 16"><g transform="translate(1 1.5) scale(1.17 1.2)"><path d="M0 12C0 8.300 1.600 6.600 6 6.600S12 8.300 12 12Z" fill="#d85a52"/><path d="M.2 12C.2 11 .5 10.300 1 9.600L11 9.600C11.500 10.300 11.800 11 11.800 12Z" fill="#b03030" opacity=".55"/><path d="M0 12C0 10.500.3 9.300 1 8.400L2.200 12ZM12 12C12 10.500 11.700 9.300 11 8.400L9.800 12Z" fill="#e6a25a"/><circle cx="6" cy="4" r="3.200" fill="#f6cfa0"/><path d="M2.500 4.300C2.100 1.300 3.800 0 6 0S9.900 1.300 9.500 4.300C8.700 2.900 7.600 2.500 6 2.500S3.300 2.900 2.500 4.300Z" fill="#8e4a24"/></g><path d="M3 12.800h10M2.500 14.200h11M3.800 11.400h8.400" stroke="#f4b8b0" stroke-width=".55" stroke-dasharray=".9 .9"/></svg></span><a><span class="t" id="t128" style="font-size:18.03px;color:#1c2e66;letter-spacing:0.196px;">Als affiliate instellen</span></a></div>
<div class="lk" style="left:62.2px;top:163.7px"><span class="abs" style="left:-23.200000000000003px;top:15px"><svg class="ic" width="20" height="20" viewBox="0 0 16 16"><g transform="translate(4.6 -0.2) scale(0.9 0.95)"><path d="M0 12C0 8.300 1.600 6.600 6 6.600S12 8.300 12 12Z" fill="#7fae62"/><path d="M.2 12C.2 11 .5 10.300 1 9.600L11 9.600C11.500 10.300 11.800 11 11.800 12Z" fill="#4f8a34" opacity=".55"/><path d="M0 12C0 10.500.3 9.300 1 8.400L2.200 12ZM12 12C12 10.500 11.700 9.300 11 8.400L9.800 12Z" fill="#e6a25a"/><circle cx="6" cy="4" r="3.200" fill="#f6cfa0"/><path d="M2.500 4.300C2.100 1.300 3.800 0 6 0S9.900 1.300 9.500 4.300C8.700 2.900 7.600 2.500 6 2.500S3.300 2.900 2.500 4.300Z" fill="#e8a032"/></g><g transform="translate(0 4.5) scale(0.95 0.96)"><path d="M0 12C0 8.300 1.600 6.600 6 6.600S12 8.300 12 12Z" fill="#5b9bea"/><path d="M.2 12C.2 11 .5 10.300 1 9.600L11 9.600C11.500 10.300 11.800 11 11.800 12Z" fill="#2f6fd0" opacity=".55"/><path d="M0 12C0 10.500.3 9.300 1 8.400L2.200 12ZM12 12C12 10.500 11.700 9.300 11 8.400L9.800 12Z" fill="#e6a25a"/><circle cx="6" cy="4" r="3.200" fill="#f6cfa0"/><path d="M2.500 4.300C2.100 1.300 3.800 0 6 0S9.900 1.300 9.500 4.300C8.700 2.900 7.600 2.500 6 2.500S3.300 2.900 2.500 4.300Z" fill="#9a5228"/></g></svg></span><a><span class="t" id="t129" style="font-size:18.03px;color:#1c2e66;letter-spacing:0.032px;">Accounts samenvoegen</span></a></div>
<div class="lk" style="left:62.2px;top:191.2px"><span class="abs" style="left:-23.200000000000003px;top:15px"><svg class="ic" width="20" height="20" viewBox="0 0 16 16"><circle cx="8" cy="8" r="6.900" fill="#d9635a" stroke="#c04a42" stroke-width=".8"/><circle cx="8" cy="8" r="5.400" fill="#d2554c" stroke="#efaaa2" stroke-width=".9"/><rect x="4.200" y="7" width="7.600" height="2" fill="#fff"/></svg></span><a><span class="t" id="t130" style="font-size:18.03px;color:#111;letter-spacing:0.192px;">Klantenaccounts sluiten</span></a></div>
<div class="lk" style="left:62.2px;top:218.7px"><span class="abs" style="left:-23.200000000000003px;top:15px"><svg class="ic" width="20" height="20" viewBox="0 0 16 16"><circle cx="8" cy="8" r="6.900" fill="#d9635a" stroke="#c04a42" stroke-width=".8"/><circle cx="8" cy="8" r="5.400" fill="#d2554c" stroke="#efaaa2" stroke-width=".9"/><rect x="4.200" y="7" width="7.600" height="2" fill="#fff"/></svg></span><a><span class="t" id="t131" style="font-size:18.03px;color:#cc0000;letter-spacing:0.257px;">Klantenaccount verwijderen</span></a></div>
<div class="lk" style="left:62.2px;top:246.2px"><span class="abs" style="left:-23.200000000000003px;top:15px"><svg class="ic" width="20" height="20" viewBox="0 0 16 16"><rect x=".5" y=".6" width="12.600" height="12.600" fill="#fff" stroke="#6f9bd0" stroke-width=".8"/><rect x=".9" y="1" width="11.800" height="2.600" fill="#8db8ea"/><path d="M.5 6.200h12.600M.5 8.700h12.600M.5 11.200h12.600M3.500 3.600v9.600M6.500 3.600v9.600M9.500 3.600v9.600" stroke="#a9c6e8" stroke-width=".7"/><rect x="6.400" y="7.200" width="9.200" height="8.300" rx=".6" fill="#5b8ed6" stroke="#2f62a8" stroke-width=".7"/><rect x="8" y="7.600" width="6" height="3.200" fill="#f6f6f6"/><path d="M8.800 8.600h4.400M8.800 9.700h4.400" stroke="#b9c9de" stroke-width=".5"/><rect x="8.400" y="12.200" width="5.200" height="3" fill="#dbe5f2"/><rect x="9.200" y="12.700" width="1.500" height="2.200" fill="#4a78be"/></svg></span><a><span class="t" id="t132" style="font-size:18.03px;color:#1c2e66;letter-spacing:0.08px;">Export Client Data</span></a></div>
</div>
<div class="box" style="left:1467px;top:614px;height:110.7px">
<h4 class="bl c title" style="left:0;width:382px;top:4px">Verzonden email</h4>
</div>
<div class="sel" style="left:1539.300px;top:667.200px;width:178.500px;height:42.500px;border-radius:5px"><svg class="abs" width="8" height="7" viewBox="0 0 8 7" style="left:161.500px;top:17px"><path d="M0 0h8l-4 7z" fill="#444"/></svg></div>
<div class="abs" style="left:1561.300px;top:667px;width:117px;height:42px;overflow:hidden"><div class="bl" style="left:0px;top:-1.2000000000000455px;"><span class="t" id="t133" style="font-size:18.03px;color:#555;letter-spacing:0.312px;">Nieuwe bericht</span></div></div>
<div class="sel" style="left:1722.200px;top:670.300px;width:54.500px;height:41.400px;border-radius:5px"></div>
<div class="bl" style="left:1738.7px;top:667.5px;"><span class="t" id="t134" style="font-size:18.03px;color:#333;letter-spacing:-0.797px;">Ga</span></div>
<div class="box" style="left:1467px;top:737px;height:200px">
<h4 class="bl c title" style="left:0;width:382px;top:3px">Notities voor medewerkers</h4>
</div>
<div class="sel" style="left:1480.300px;top:790.300px;width:356.700px;height:140px;border-radius:5px"></div>
<svg class="abs" style="left:1383px;top:321px" width="14" height="21" viewBox="0 0 14 21"><path d="M.6 1.400V17.300L4.400 14.200L6.800 19.400L9.600 18.300L7.500 13.300L12 13Z" fill="#fff" stroke="#111" stroke-width="1.100" stroke-linejoin="round"/></svg>
<div id="sb"><i></i><svg class="abs" style="left:6px;top:10px" width="9" height="5" viewBox="0 0 9 5"><path d="M0 5h9l-4.500-5z" fill="#505050"/></svg><svg class="abs" style="left:6px;top:890px" width="9" height="5" viewBox="0 0 9 5"><path d="M0 0h9l-4.500 5z" fill="#505050"/></svg></div>
<div id="bottomline"></div>
</body></html>
